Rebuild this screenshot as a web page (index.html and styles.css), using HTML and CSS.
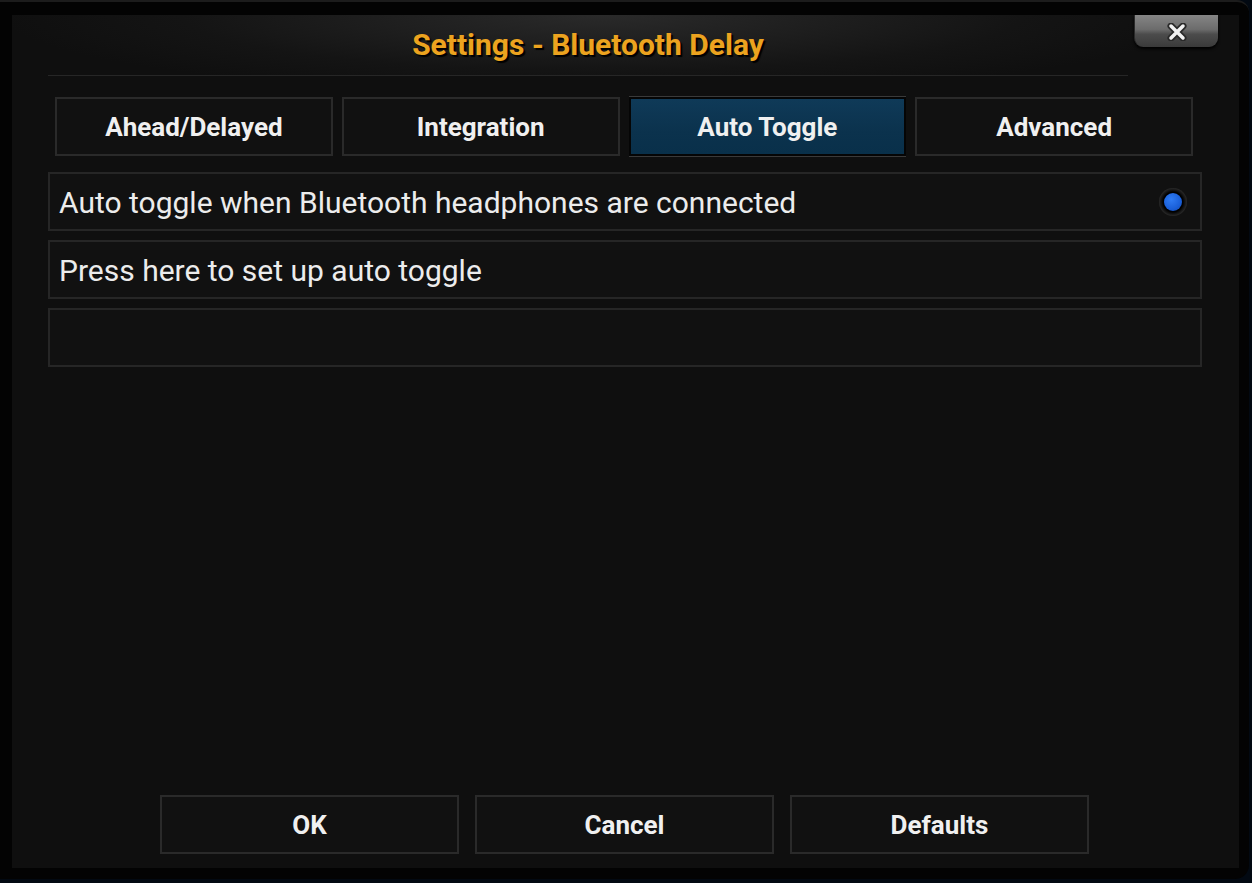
FILE: index.html
```html
<!DOCTYPE HTML>
<html>

<head>
    <meta name="viewport" content="width=device-width, initial-scale=1">
    <title>Settings - Bluetooth Delay</title>
    <link rel="stylesheet" href="styles.css">
</head>

<body>
    <div class="frame">
        <div class="panel">
            <div class="header">
                <h2 class="title">Settings - Bluetooth Delay</h2>
                <button class="closeButton">
                    <svg width="26" height="18" viewBox="0 0 26 18">
                        <path d="M7 3 L19 15 M19 3 L7 15" stroke="#2a2a2a" stroke-width="7" stroke-linecap="round" />
                        <path d="M7 3 L19 15 M19 3 L7 15" stroke="#f2f2f2" stroke-width="3.5" stroke-linecap="round" />
                    </svg>
                </button>
            </div>
            <div class="tabs">
                <button class="tab">Ahead/Delayed</button>
                <button class="tab">Integration</button>
                <button class="tab active">Auto Toggle</button>
                <button class="tab">Advanced</button>
            </div>
            <div class="list">
                <div class="row">
                    <span>Auto toggle when Bluetooth headphones are connected</span>
                    <span class="radio"><span class="radioDot"></span></span>
                </div>
                <div class="row">
                    <span>Press here to set up auto toggle</span>
                </div>
                <div class="row"></div>
            </div>
            <div class="buttons">
                <button class="dialogButton">OK</button>
                <button class="dialogButton">Cancel</button>
                <button class="dialogButton">Defaults</button>
            </div>
        </div>
    </div>
</body>

</html>
```

FILE: styles.css
```css
html {
    font-family: Roboto, "Liberation Sans", sans-serif;
}

body {
    margin: 0;
    width: 1252px;
    height: 883px;
    background: #020912;
    overflow: hidden;
}

button {
    font-family: inherit;
    cursor: pointer;
}

.frame {
    box-sizing: border-box;
    width: 1249px;
    height: 879px;
    padding: 15px 10px 11px 12px;
    background: #030303;
    border-top: 2px solid #1c1c1c;
    border-radius: 0 12px 14px 0;
}

.panel {
    display: flex;
    flex-direction: column;
    height: 100%;
    background: #0f0f0f;
}

.header {
    position: relative;
    height: 60px;
    background: radial-gradient(ellipse 600px 80px at 590px 0, #2a2a2a, #141414 70%, #0f0f0f);
    margin-top: -2px;
}

.title {
    margin: 0 111px 0 36px;
    height: 60px;
    line-height: 60px;
    border-bottom: 1px solid #262626;
    text-align: center;
    font-size: 30px;
    font-weight: 700;
    color: #eca31f;
    text-shadow: 2px 2px 1px #000;
}

.closeButton {
    position: absolute;
    top: 0;
    right: 21px;
    width: 84px;
    height: 32px;
    padding: 2px 0 0 0;
    border: 0;
    border-left: 1px solid #2a2a2a;
    border-radius: 0 0 9px 9px;
    background: linear-gradient(#858585, #6c6c6c 45%, #4c4c4c 60%, #3a3a3a);
    box-shadow: 0 2px 3px #000;
    display: flex;
    align-items: center;
    justify-content: center;
}

.tabs {
    display: grid;
    grid-template-columns: repeat(4, 1fr);
    gap: 9px;
    margin: 22px 46px 0 43px;
}

.tab {
    height: 59px;
    padding-top: 2px;
    border: 2px solid #2a2a2a;
    background: #111;
    color: #f0f0f0;
    font-size: 26px;
    font-weight: 700;
}

.tab.active {
    border: 2px solid #050505;
    background: linear-gradient(#0f3a58, #0b324d 60%, #09304a);
    box-shadow: 0 -1px 0 #3a3a3a, 0 1px 0 #3a3a3a;
}

.list {
    display: flex;
    flex-direction: column;
    gap: 9px;
    margin: 16px 37px 0 36px;
}

.row {
    box-sizing: border-box;
    height: 59px;
    display: flex;
    align-items: center;
    justify-content: space-between;
    padding: 2px 13px 0 9px;
    border: 2px solid #262626;
    background: #111;
    color: #ececec;
    font-size: 30px;
}

.radio {
    display: flex;
    align-items: center;
    justify-content: center;
    width: 28px;
    height: 28px;
    margin-top: -2px;
    border-radius: 50%;
    background: radial-gradient(circle, #000 50%, #3c3c3c 80%, #1a1a1a);
}

.radioDot {
    width: 18px;
    height: 18px;
    border-radius: 50%;
    background: radial-gradient(circle at 40% 35%, #2f7cf5, #1a5fd8 60%, #1446a8);
}

.buttons {
    margin-top: auto;
    display: flex;
    justify-content: center;
    gap: 16px;
    padding: 0 2px 14px 0;
}

.dialogButton {
    width: 299px;
    height: 59px;
    padding-top: 2px;
    border: 2px solid #2a2a2a;
    background: #111;
    color: #f0f0f0;
    font-size: 26px;
    font-weight: 700;
}
```
